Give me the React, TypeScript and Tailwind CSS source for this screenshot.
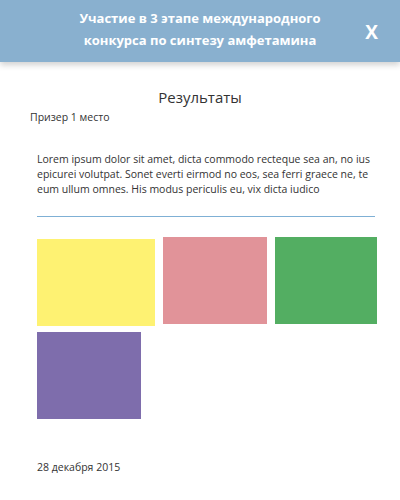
export default function App() {
  return (
    <div className="w-[400px] h-[500px] bg-white overflow-hidden font-['Open_Sans',sans-serif] text-[#333]">
      {/* Header */}
      <div className="relative h-[62px] bg-[#89b0cf] shadow-[0_3px_6px_rgba(0,0,0,0.18)] flex items-center justify-center">
        <div className="-mt-[4px] text-white font-bold text-[13px] leading-[22px] text-center">
          Участие в 3 этапе международного
          <br />
          конкурса по синтезу амфетамина
        </div>
        <div className="absolute right-[22px] top-[18px] text-white font-bold text-[19px]">X</div>
      </div>

      {/* Title */}
      <div className="mt-[25px] text-center text-[15px] leading-5">Результаты</div>
      <div className="mt-[2px] pl-[30px] text-[10.5px] leading-4">Призер 1 место</div>

      {/* Body */}
      <div className="px-[37px] pr-[25px] mt-[27px]">
        <p className="text-[10.5px] leading-[15px]">
          Lorem ipsum dolor sit amet, dicta commodo recteque sea an, no ius epicurei volutpat. Sonet everti eirmod no eos, sea
          ferri graece ne, te eum ullum omnes. His modus periculis eu, vix dicta iudico
        </p>
        <div className="mt-[19px] h-px bg-[#7fb0d5]" />

        <div className="mt-[20px] flex flex-wrap items-start gap-x-[8px] gap-y-[6px] w-[340px]">
          <div className="mt-[2px] w-[118px] h-[87px] bg-[#fef272]" />
          <div className="w-[104px] h-[87px] bg-[#e19399]" />
          <div className="w-[102px] h-[87px] bg-[#53ae62]" />
          <div className="w-[104px] h-[87px] bg-[#7e6dac]" />
        </div>

        <div className="mt-[40px] text-[10.5px] leading-4">28 декабря 2015</div>
      </div>
    </div>
  );
}
